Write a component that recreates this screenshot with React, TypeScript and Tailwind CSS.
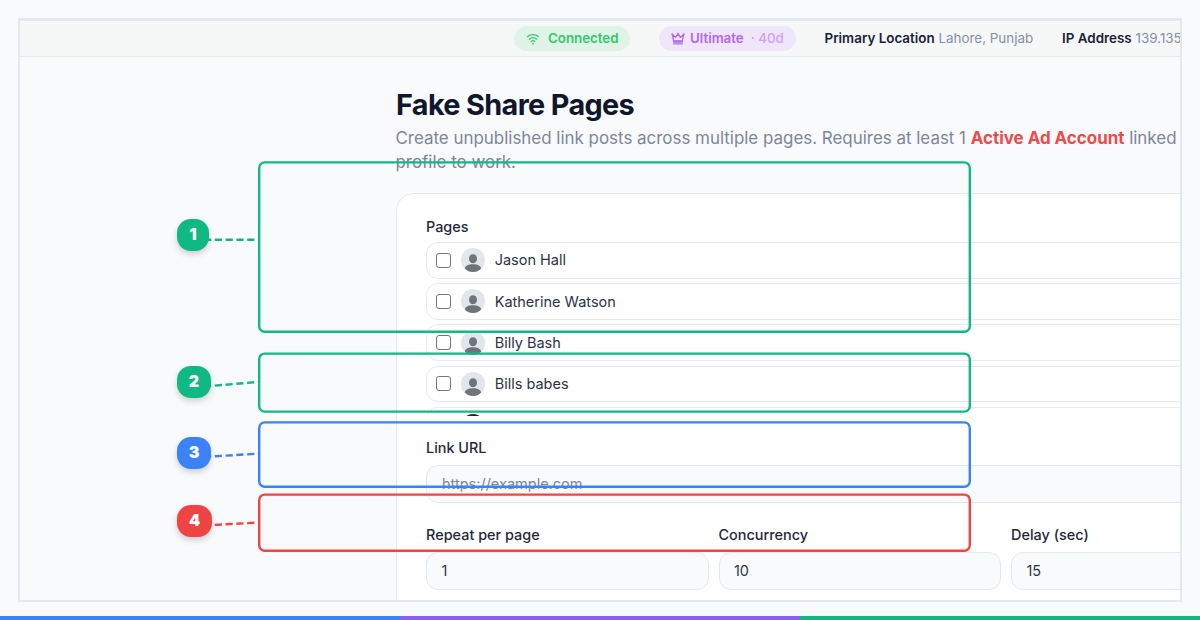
const pages = ["Jason Hall", "Katherine Watson", "Billy Bash", "Bills babes"]

const fields = [
  { label: "Repeat per page", value: "1" },
  { label: "Concurrency", value: "10" },
  { label: "Delay (sec)", value: "15" },
]

const steps = [
  { n: 1, color: "#10b981", badge: "top-[219px] w-[32px] bg-[#10b981]", box: [162.4, 169.4], line: [239.7, 239.7] },
  { n: 2, color: "#10b981", badge: "top-[366px] w-[34px] bg-[#10b981]", box: [353.6, 58], line: [386.5, 382] },
  { n: 3, color: "#3b82f6", badge: "top-[437px] w-[34px] bg-[#3b82f6]", box: [422.4, 64.3], line: [456.9, 453.7] },
  { n: 4, color: "#ef4444", badge: "top-[505px] w-[35px] bg-[#ef4444]", box: [494.6, 56.2], line: [525.4, 522.6] },
]

function WifiIcon() {
  return (
    <svg width="14" height="14" viewBox="0 0 24 24" fill="none" stroke="currentColor" strokeWidth="2.2" strokeLinecap="round">
      <path d="M2.5 8a15 15 0 0 1 19 0" />
      <path d="M5.5 12.3a10 10 0 0 1 13 0" />
      <path d="M8.8 16.2a5 5 0 0 1 6.4 0" />
      <path d="M12 20h.01" strokeWidth="3.2" />
    </svg>
  )
}

function CrownIcon() {
  return (
    <svg width="14" height="14" viewBox="0 0 14 14" fill="none" stroke="currentColor" strokeWidth="1.3" strokeLinejoin="round">
      <path d="M2.6 9 1.4 2.6 4.6 5.4 7 1.8 9.4 5.4 12.6 2.6 11.4 9Z" />
      <path d="M2.2 8.6h9.6v4H2.2z" fill="currentColor" stroke="none" opacity="0.75" />
      <g fill="currentColor" stroke="none">
        <circle cx="1.2" cy="2.2" r="0.9" />
        <circle cx="7" cy="1.7" r="0.9" />
        <circle cx="12.8" cy="2.2" r="0.9" />
      </g>
    </svg>
  )
}

function Avatar() {
  return (
    <svg className="shrink-0" width="24" height="24" viewBox="0 0 24 24">
      <circle cx="12" cy="12" r="12" fill="#e2e5e9" />
      <ellipse cx="12" cy="10.8" rx="4" ry="4.5" fill="#6f737a" />
      <path d="M3.8 20.4c.6-2.8 3.8-4.2 8.2-4.2s7.6 1.4 8.2 4.2A12 12 0 0 1 12 24a12 12 0 0 1-8.2-3.6Z" fill="#6f737a" />
    </svg>
  )
}

function TopBar() {
  return (
    <header className="flex h-[36px] items-center border-b border-[#e2e8f0] bg-[#f6f8f7] pl-[494px] text-[13.3px] whitespace-nowrap">
      <div className="flex h-[25px] w-[116px] shrink-0 items-center rounded-full bg-[#dff4e7] pl-[12px] font-semibold text-[#35c76b]">
        <WifiIcon />
        <span className="ml-2">Connected</span>
      </div>
      <div className="ml-[29px] flex h-[25px] w-[137px] shrink-0 items-center rounded-full bg-[#efe6fa] pl-[12px] font-semibold text-[#b265f6]">
        <CrownIcon />
        <span className="ml-[5px]">Ultimate</span>
        <span className="ml-[7px] font-medium text-[#cfa0f8]">· 40d</span>
      </div>
      <div className="ml-[28.5px] w-[237.5px] shrink-0 text-[13.42px] text-[#8390a5]">
        <b className="font-semibold text-[#1a2236]">Primary Location</b> Lahore, Punjab
      </div>
      <div className="text-[13.42px] text-[#8390a5]">
        <b className="font-semibold text-[#1a2236]">IP Address</b> 139.135
      </div>
    </header>
  )
}

function PageList() {
  return (
    <div className="mt-[5px] h-[174px] space-y-[4.7px] overflow-hidden">
      {pages.map((name) => (
        <label key={name} className="flex h-[36.5px] items-center rounded-[12px] border border-[#e6eaf0] pl-[9.4px]">
          <span className="size-[15px] shrink-0 rounded-[3px] border-[1.5px] border-[#767676] bg-white" />
          <span className="ml-[9.6px] flex">
            <Avatar />
          </span>
          <span className="ml-[9.7px] text-[14.5px] text-[#2b3446]">{name}</span>
        </label>
      ))}
      <div className="h-[36.5px] rounded-[12px] border border-[#e6eaf0] pt-[6px] pl-[34px]">
        <svg width="24" height="24" viewBox="0 0 24 24">
          <circle cx="12" cy="12" r="12" fill="#2d2022" />
        </svg>
      </div>
    </div>
  )
}

function Annotations() {
  return (
    <div className="absolute inset-0">
      <svg className="absolute inset-0" width="1200" height="620" fill="none">
        {steps.map(({ n, color, box, line }) => (
          <g key={n} stroke={color} strokeWidth="2.4">
            <rect x="259.2" y={box[0]} width="710.6" height={box[1]} rx="5.5" />
            <line x1="204" y1={line[0]} x2="258" y2={line[1]} strokeDasharray="7.2 3.6" />
          </g>
        ))}
      </svg>
      {steps.map(({ n, badge }) => (
        <span
          key={n}
          className={`absolute left-[177px] flex h-[32px] items-center justify-center rounded-[14px] pb-[2px] text-[16px] font-black text-white shadow-[0_3px_6px_rgba(0,0,0,0.18)] ${badge}`}
        >
          {n}
        </span>
      ))}
    </div>
  )
}

export default function App() {
  return (
    <div className="relative flex h-[620px] w-[1200px] flex-col justify-between overflow-hidden bg-[#f8fafc] pt-[18px] font-['Inter',sans-serif]">
      <div className="mx-[18px] h-[584px] overflow-hidden border-2 border-t-3 border-[#e2e8f0] bg-[#f9fafc]">
        <TopBar />
        <main className="w-[1400px] pl-[376px]">
          <h1 className="pt-[30px] text-[28.8px] leading-[36px] font-bold tracking-[-0.63px] text-[#0f172a]">
            Fake Share Pages
          </h1>
          <p className="mt-[3px] -ml-[0.5px] text-[16.93px] leading-[24px] whitespace-nowrap text-[#7b879b]">
            Create unpublished link posts across multiple pages. Requires at least 1{" "}
            <b className="font-bold text-[#ef4a4a]">Active Ad Account</b> linked
            <br />
            profile to work.
          </p>
          <section className="mt-[19px] h-[460px] rounded-[18px] border border-[#e2e8f0] bg-white px-[29px] pt-[23px] text-[14.4px] text-[#1e293b]">
            <h2 className="leading-[20px] font-medium">Pages</h2>
            <PageList />
            <h2 className="mt-[22px] leading-[20px] font-medium">Link URL</h2>
            <div className="mt-[7px] flex h-[38px] items-center rounded-[12px] border border-[#e2e8f0] bg-[#f8fafc] pl-[15px] text-[14.5px] text-[#7b8798]">
              https://example.com
            </div>
            <div className="mt-[21.5px] flex gap-[10px]">
              {fields.map(({ label, value }) => (
                <div key={label} className="w-[282.5px]">
                  <h2 className="text-[14.45px] leading-[20px] font-medium">{label}</h2>
                  <div className="mt-[7.5px] flex h-[38px] items-center rounded-[12px] border border-[#e2e8f0] bg-[#f8fafc] pl-[14.5px] text-[#2b3446]">
                    {value}
                  </div>
                </div>
              ))}
            </div>
          </section>
        </main>
      </div>
      <div className="grid h-1 grid-cols-3">
        <div className="bg-[#3b82f6]" />
        <div className="bg-[#8b5cf6]" />
        <div className="bg-[#10b981]" />
      </div>
      <Annotations />
    </div>
  )
}
